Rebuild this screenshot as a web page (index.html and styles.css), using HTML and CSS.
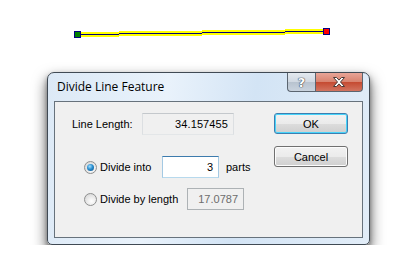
FILE: index.html
```html
<!DOCTYPE html>
<html lang="en">
<head>
    <meta charset="UTF-8">
    <title>Divide Line Feature</title>
    <link rel="stylesheet" href="styles.css">
</head>
<body>
    <svg class="canvas" width="416" height="72" shape-rendering="crispEdges">
        <!-- yellow selection under the line, stepped like the map draws it -->
        <rect x="80" y="32" width="39" height="5" fill="#ffff00"/>
        <rect x="119" y="31" width="83" height="5" fill="#ffff00"/>
        <rect x="202" y="30" width="83" height="5" fill="#ffff00"/>
        <rect x="285" y="29" width="39" height="5" fill="#ffff00"/>
        <rect x="80" y="34" width="39" height="1" fill="#000080"/>
        <rect x="119" y="33" width="83" height="1" fill="#000080"/>
        <rect x="202" y="32" width="83" height="1" fill="#000080"/>
        <rect x="285" y="31" width="39" height="1" fill="#000080"/>
        <rect x="74.5" y="31.5" width="6" height="6" fill="#007f00" stroke="#000080"/>
        <rect x="323.5" y="28.5" width="6" height="6" fill="#ff0000" stroke="#000080"/>
    </svg>

    <div class="dialog">
        <div class="titlebar">
            <span class="title">Divide Line Feature</span>
            <div class="caption-buttons">
                <span class="cap-btn help">?</span>
                <span class="cap-btn close">
                    <svg width="14" height="12" viewBox="0 0 14 12">
                        <path d="M1.5 1.5h3l2.5 2.6 2.5-2.6h3l-4 4.5 4 4.5h-3L7 7.9l-2.5 2.6h-3l4-4.5z" fill="#fff" stroke="#4a3a36" stroke-width="1"/>
                    </svg>
                </span>
            </div>
        </div>
        <div class="client">
            <div class="fields">
                <div class="row first">
                    <span class="label">Line Length:</span>
                    <span class="box readonly">34.157455</span>
                </div>
                <div class="row radio-row">
                    <span class="radio checked"></span>
                    <span class="radio-label into">Divide into</span>
                    <span class="box edit">3</span>
                    <span class="unit">parts</span>
                </div>
                <div class="row radio-row second">
                    <span class="radio"></span>
                    <span class="radio-label bylen">Divide by length</span>
                    <span class="box disabled">17.0787</span>
                </div>
            </div>
            <div class="buttons">
                <button class="btn default">OK</button>
                <button class="btn">Cancel</button>
            </div>
        </div>
    </div>
</body>
</html>
```

FILE: styles.css
```css
body {
    margin: 0;
    background-color: #ffffff;
    font-family: 'Liberation Sans', Arial, sans-serif;
    font-size: 11px;
    color: #000000;
}
.canvas {
    display: block;
}
.dialog {
    margin-left: 47px;
    width: 323px;
    height: 173px;
    box-sizing: border-box;
    border: 1px solid #404a54;
    border-radius: 7px 7px 5px 5px;
    padding: 0 6px 6px 6px;
    background: linear-gradient(100deg, #dce9f6 0%, #e9f2fb 35%, #d3e4f5 60%, #e2edf8 100%);
    box-shadow: 0 7px 14px 1px rgba(0, 0, 0, 0.55), 0 3px 5px rgba(0, 0, 0, 0.35);
}
.titlebar {
    height: 28px;
    display: flex;
    justify-content: space-between;
    align-items: flex-start;
}
.title {
    font-family: 'Open Sans', sans-serif;
    font-size: 12px;
    padding: 6px 0 0 3px;
    line-height: 16px;
}
.caption-buttons {
    display: flex;
}
.cap-btn {
    height: 19px;
    box-sizing: border-box;
    border: 1px solid #5b6570;
    border-top: none;
    display: flex;
    align-items: center;
    justify-content: center;
}
.help {
    width: 28px;
    border-radius: 0 0 0 4px;
    border-right: none;
    background: linear-gradient(#e3e9ef 0%, #d0d8e1 50%, #b8c3cf 51%, #c9d3de 100%);
    color: #ffffff;
    font-family: 'DejaVu Sans', sans-serif;
    font-weight: bold;
    font-size: 13px;
    text-shadow: 0 0 1px #3c4550, 0 0 1px #3c4550, 0 0 1px #3c4550;
}
.close {
    width: 48px;
    border-radius: 0 0 4px 0;
    background: linear-gradient(#e8a597 0%, #d8826e 50%, #c54a31 51%, #d27460 100%);
}
.client {
    height: 137px;
    box-sizing: border-box;
    border: 1px solid #67727c;
    background-color: #f0f0f0;
    display: flex;
}
.fields {
    width: 218px;
    box-sizing: border-box;
    padding-left: 17px;
}
.row {
    display: flex;
    align-items: center;
}
.row.first {
    margin-top: 11px;
}
.label {
    width: 70px;
}
.box {
    height: 22px;
    box-sizing: border-box;
    border: 1px solid #abadb3;
    text-align: right;
    line-height: 20px;
    padding-right: 5px;
}
.readonly {
    width: 92px;
    background-color: #f0f0f0;
    border-color: #c4c8cc #dcdfe2 #e3e6e8 #dcdfe2;
    letter-spacing: 0.1px;
}
.radio-row {
    margin-left: 12px;
}
.radio-row.second {
    margin-top: 10px;
}
.row.radio-row:not(.second) {
    margin-top: 21px;
}
.radio {
    width: 13px;
    height: 13px;
    box-sizing: border-box;
    border-radius: 50%;
    border: 1px solid #8e8f8f;
    background: radial-gradient(circle at 60% 65%, #ffffff 0%, #e8e8e8 50%, #cfcfcf 100%);
    margin-right: 3px;
    position: relative;
}
.radio.checked::after {
    content: '';
    position: absolute;
    left: 2px;
    top: 2px;
    width: 7px;
    height: 7px;
    border-radius: 50%;
    background: radial-gradient(circle at 40% 35%, #a6e0ff 0%, #2a8fd0 45%, #0c4a80 100%);
}
.radio-label.into {
    width: 62px;
}
.radio-label.bylen {
    width: 87px;
}
.edit {
    width: 57px;
    background-color: #ffffff;
    border-color: #3d7bad #a4c9e3 #b7d9ed #a4c9e3;
}
.unit {
    margin-left: 7px;
}
.disabled {
    width: 57px;
    color: #6d6d6d;
    background-color: #f0f0f0;
    border-color: #adb2b5;
}
.buttons {
    padding-left: 1px;
    display: flex;
    flex-direction: column;
    gap: 12px;
    padding-top: 11px;
}
.btn {
    width: 74px;
    height: 21px;
    box-sizing: border-box;
    border: 1px solid #707070;
    border-radius: 3px;
    background: linear-gradient(#f2f2f2 0%, #ebebeb 50%, #dddddd 51%, #cfcfcf 100%);
    font-family: 'Liberation Sans', Arial, sans-serif;
    font-size: 11px;
    color: #000000;
    padding: 0;
    box-shadow: inset 0 0 0 1px #fcfcfc;
}
.btn.default {
    border-color: #3c7fb1;
    box-shadow: inset 0 0 0 1px #48d4fa;
}
```
